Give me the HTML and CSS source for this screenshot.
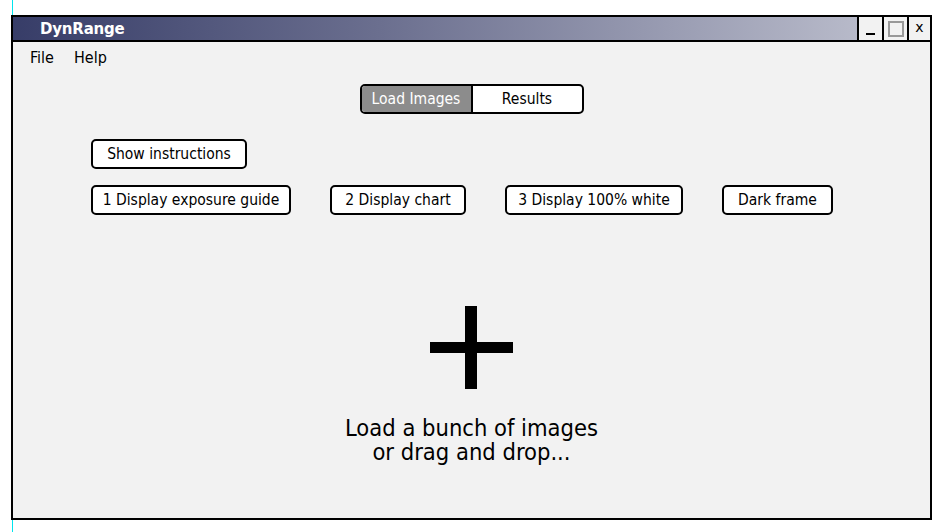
FILE: index.html
```html
<!DOCTYPE html>
<html>
<head>
<meta charset="utf-8">
<link rel="stylesheet" href="styles.css">
</head>
<body>
<div class="window">
  <div class="titlebar">
    <span class="title">DynRange</span>
    <div class="winbtns">
      <div class="wbtn wmin"><span class="minbar"></span></div>
      <div class="wbtn wmax"><span class="maxbox"></span></div>
      <div class="wbtn wclose">x</div>
    </div>
  </div>
  <div class="content">
    <div class="menu">
      <span class="menuitem">File</span>
      <span class="menuitem">Help</span>
    </div>
    <div class="tabsrow">
      <div class="tabs">
        <div class="tab active">Load Images</div>
        <div class="tab">Results</div>
      </div>
    </div>
    <div class="row first">
      <div class="btn b-instr">Show instructions</div>
    </div>
    <div class="row second">
      <div class="btn b-guide">1 Display exposure guide</div>
      <div class="btn b-chart">2 Display chart</div>
      <div class="btn b-white">3 Display 100% white</div>
      <div class="btn b-dark">Dark frame</div>
    </div>
    <div class="drop">
      <div class="plus"><span class="pv"></span><span class="ph"></span></div>
      <div class="droptext">
        <div class="dline">Load a bunch of images</div>
        <div class="dline">or drag and drop...</div>
      </div>
    </div>
  </div>
</div>
</body>
</html>
```
FILE: styles.css
```css
html, body {
  margin: 0;
  padding: 0;
}
body {
  width: 952px;
  height: 532px;
  background: linear-gradient(#00e5ee, #00e5ee) no-repeat 12px 0 / 1px 100%, #ffffff;
  font-family: "DejaVu Sans Condensed", "Liberation Sans", sans-serif;
  color: #000;
  overflow: hidden;
  padding-top: 15px;
  box-sizing: border-box;
}
.window {
  margin-left: 11px;
  width: 921px;
  height: 505px;
  box-sizing: border-box;
  border: 2px solid #000;
  background: #f2f2f2;
  display: flex;
  flex-direction: column;
}
.titlebar {
  height: 25px;
  box-sizing: border-box;
  border-bottom: 2px solid #000;
  background: linear-gradient(to right, #373d68 0%, #6b6f8f 40%, #c3c5d2 100%);
  display: flex;
  align-items: center;
  justify-content: space-between;
}
.title {
  color: #fff;
  font-family: "DejaVu Sans", sans-serif;
  font-weight: bold;
  font-size: 15px;
  margin-left: 27px;
  letter-spacing: -0.2px;
}
.winbtns {
  display: flex;
  align-self: stretch;
}
.wbtn {
  width: 23px;
  background: #f2f2f2;
  border-left: 2px solid #000;
  display: flex;
  align-items: center;
  justify-content: center;
}
.minbar {
  width: 9px;
  height: 2px;
  background: #000;
  margin-top: 10px;
}
.maxbox {
  width: 12px;
  height: 12px;
  border: 2px solid #999;
}
.wclose {
  font-family: "DejaVu Sans", sans-serif;
  font-size: 14px;
  line-height: 1;
  padding-bottom: 3px;
  box-sizing: border-box;
}
.content {
  flex: 1;
  display: flex;
  flex-direction: column;
}
.menu {
  display: flex;
  gap: 20px;
  padding-left: 17px;
  height: 30px;
  align-items: center;
  font-size: 16px;
}
.tabsrow {
  display: flex;
  justify-content: center;
  margin-top: 12px;
}
.tabs {
  display: flex;
  border: 2px solid #000;
  border-radius: 5px;
  overflow: hidden;
  height: 30px;
  box-sizing: border-box;
  background: #fff;
}
.tab {
  display: flex;
  align-items: center;
  justify-content: center;
  font-size: 15.5px;
  width: 109px;
}
.tab.active {
  background: #8c8c8c;
  color: #fff;
  border-right: 2px solid #000;
}
.row {
  display: flex;
  gap: 39px;
  padding-left: 78px;
}
.row.first {
  margin-top: 25px;
}
.row.second {
  margin-top: 16px;
}
.btn {
  height: 30px;
  box-sizing: border-box;
  border: 2px solid #000;
  border-radius: 5px;
  background: #fff;
  display: flex;
  align-items: center;
  justify-content: center;
  font-size: 15.5px;
}
.b-instr { width: 156px; }
.b-guide { width: 200px; }
.b-chart { width: 136px; }
.b-white { width: 178px; }
.b-dark { width: 111px; }
.drop {
  display: flex;
  flex-direction: column;
  align-items: center;
  margin-top: 91px;
}
.plus {
  width: 83px;
  height: 83px;
  position: relative;
}
.pv {
  position: absolute;
  left: 35px;
  top: 0;
  width: 12px;
  height: 83px;
  background: #000;
}
.ph {
  position: absolute;
  left: 0;
  top: 36px;
  width: 83px;
  height: 11px;
  background: #000;
}
.droptext {
  margin-top: 27px;
  display: flex;
  flex-direction: column;
  align-items: center;
}
.dline {
  font-size: 23.5px;
  line-height: 24px;
  height: 24px;
  text-align: center;
}
```
